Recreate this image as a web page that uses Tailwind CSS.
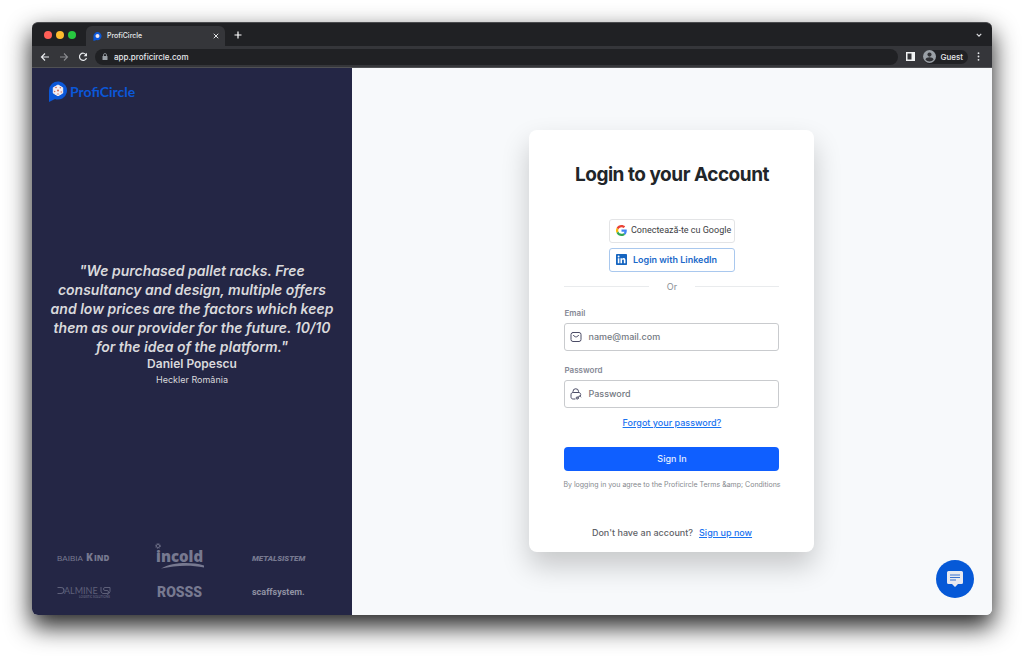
<!DOCTYPE html>
<html lang="en">
<head>
    <meta charset="UTF-8">
    <meta name="viewport" content="width=device-width, initial-scale=1.0">
    <title>ProfiCircle</title>
    <script src="https://cdn.jsdelivr.net/npm/@tailwindcss/browser@4"></script>
</head>
<body class="h-screen bg-white px-8 pt-[22px] pb-[43px] font-['Inter',sans-serif] overflow-hidden">
    <div class="relative flex flex-col h-full rounded-md shadow-[0_11px_24px_1px_rgba(0,0,0,0.85)]">
        <!-- Tab strip -->
        <div class="flex items-center h-6 shrink-0 bg-[#202124] rounded-t-md pl-3 pr-[10px] border-t border-[#4a4b4e]">
            <div class="flex gap-1 w-[42px]">
                <span class="size-2 rounded-full bg-[#ff5f57]"></span>
                <span class="size-2 rounded-full bg-[#febc2e]"></span>
                <span class="size-2 rounded-full bg-[#28c840]"></span>
            </div>
            <div class="flex items-center self-end w-[139px] h-5 bg-[#35363a] rounded-t-md pl-[7px] pr-[6px]">
                <svg class="size-[9px]" viewBox="0 0 20 20"><path d="M1 20V9a9 9 0 1 1 7 9z" fill="#0b57d8"/><circle cx="10" cy="9" r="4.5" fill="#f1e6ea"/></svg>
                <span class="ml-[5px] text-[7px] font-medium text-[#e8eaed]">ProfiCircle</span>
                <button type="button" aria-label="Close tab" class="ml-auto">
                    <svg class="size-[6px]" viewBox="0 0 8 8" stroke="#e8eaed" stroke-width="1.3"><path d="M1 1l6 6M7 1L1 7"/></svg>
                </button>
            </div>
            <button type="button" aria-label="New tab" class="ml-[9px]">
                <svg class="size-2" viewBox="0 0 8 8" stroke="#fff" stroke-width="1.2"><path d="M4 .5v7M.5 4h7"/></svg>
            </button>
            <button type="button" aria-label="Search tabs" class="ml-auto">
                <svg class="size-[6px]" viewBox="0 0 8 8" fill="none" stroke="#dcdde0" stroke-width="1.6"><path d="M1 2.500l3 3 3-3"/></svg>
            </button>
        </div>

        <!-- Toolbar -->
        <div class="flex items-center h-[22px] shrink-0 bg-[#35363a] border-b border-[#505154] pl-2 pr-[9px]">
            <button type="button" aria-label="Back"><svg class="size-[10px]" viewBox="0 0 10 10" fill="none" stroke="#e8eaed" stroke-width="1.2"><path d="M9 5H1.500M5 1.500L1.500 5 5 8.500"/></svg></button>
            <button type="button" aria-label="Forward" class="ml-[9px]"><svg class="size-[10px]" viewBox="0 0 10 10" fill="none" stroke="#8b8c90" stroke-width="1.1"><path d="M1 5h7.500M5 1.500L8.500 5 5 8.500"/></svg></button>
            <button type="button" aria-label="Reload" class="ml-[9px]"><svg class="size-[10px]" viewBox="0 0 10 10" fill="none" stroke="#e8eaed" stroke-width="1.2"><path d="M8.200 3A3.600 3.600 0 1 0 8.500 6"/><path d="M9 .8v3.400H5.600z" fill="#e8eaed" stroke="none"/></svg></button>
            <div class="flex flex-1 items-center h-4 ml-[7px] px-[7px] rounded-full bg-[#202124]">
                <svg class="w-[6px] h-2" viewBox="0 0 6 8"><path d="M1.500 3V2a1.500 1.500 0 0 1 3 0v1" fill="none" stroke="#9aa0a6" stroke-width=".8"/><rect x=".5" y="3" width="5" height="4" rx=".6" fill="#9aa0a6"/></svg>
                <input type="text" aria-label="Address" value="app.proficircle.com" class="flex-1 ml-[6px] text-[8px] leading-4 font-medium text-[#e8eaed] outline-none">
            </div>
            <button type="button" aria-label="Side panel" class="ml-2"><svg class="size-[9px]" viewBox="0 0 9 9"><path d="M0 0h9v9H0z" fill="#f1f3f4"/><path d="M1.500 1.500h4v6h-4z" fill="#35363a"/></svg></button>
            <button type="button" class="flex items-center gap-[4px] h-[14px] ml-2 pr-[5px] rounded-full bg-[#202124] text-[8px] font-medium text-[#e8eaed]">
                <svg class="size-[13px]" viewBox="0 0 24 24"><circle cx="12" cy="12" r="12" fill="#9aa0a6"/><circle cx="12" cy="8.500" r="3.800" fill="#303135"/><path d="M4.500 18c1-6 14-6 15 0a10 10 0 0 1-15 0z" fill="#303135"/></svg>
                Guest
            </button>
            <button type="button" aria-label="Menu" class="ml-[6px]"><svg class="w-[9px] h-[9px]" viewBox="0 0 9 9" fill="#e8eaed"><circle cx="4.500" cy="1.200" r=".9"/><circle cx="4.500" cy="4.500" r=".9"/><circle cx="4.500" cy="7.800" r=".9"/></svg></button>
        </div>

        <div class="flex flex-1 min-h-0">
            <!-- Sidebar -->
            <aside class="flex flex-col w-1/3 bg-[#242645] rounded-bl-md px-4 pt-[13px] pb-[9px]">
                <a href="#" class="flex items-center gap-[2px] text-sm leading-[21px] font-bold text-[#0b57d8] font-['Lato',sans-serif]">
                    <svg class="w-5 h-[21px]" viewBox="0 0 20 21">
                        <path d="M1 21V9.500A9 9 0 1 1 7 18z" fill="#0b57d8"/>
                        <path d="M10 4l4.700 2.700v5.400L10 14.800l-4.700-2.700V6.700z" fill="#f4eef2" stroke="#f4eef2" stroke-linejoin="round"/>
                        <g fill="#d2624f"><circle cx="10" cy="9.500" r="1"/><circle cx="8" cy="6.500" r=".8"/><circle cx="12.300" cy="6.800" r=".7"/><circle cx="6.700" cy="10.500" r=".7"/><circle cx="13.200" cy="11" r=".7"/><circle cx="10" cy="13" r=".7"/></g>
                    </svg>
                    ProfiCircle
                </a>
                <div class="flex-1 flex flex-col justify-center pt-[3px] text-center text-[#d9d9dc]">
                    <blockquote class="text-sm leading-[19px] font-semibold italic">"We purchased pallet racks. Free<br>consultancy and design, multiple offers<br>and low prices are the factors which keep<br>them as our provider for the future. 10/10<br>for the idea of the platform."</blockquote>
                    <p class="text-xs leading-4 font-semibold">Daniel Popescu</p>
                    <p class="text-[9px] leading-4">Heckler România</p>
                </div>
                <!-- Partners -->
                <div class="grid grid-cols-[auto_auto_auto] justify-between gap-y-[7px] items-center pl-2 pr-7 text-[#777990]">
                    <svg class="w-[60px] h-7" viewBox="0 0 60 28" fill="currentColor"><text x="1" y="18" font-family="Liberation Sans" font-size="8">BAIBIA</text><text x="30" y="18" font-family="Open Sans" font-weight="800" font-size="10">K</text><text x="38" y="18" font-family="Open Sans" font-weight="800" font-size="8">IND</text></svg>
                    <svg class="w-[60px] h-7" viewBox="0 0 60 28" fill="currentColor"><circle cx="6" cy="3" r="1.600" fill="none" stroke="currentColor" stroke-width=".8"/><circle cx="6" cy="3" r="2.500" fill="none" stroke="currentColor" stroke-width=".8" stroke-dasharray="1 1"/><text x="4" y="19" font-family="Open Sans" font-weight="800" font-size="15">incold</text><path d="M9 25.500c11-6 29-7 43-3v2c-14-3-29-2-43 1z"/></svg>
                    <svg class="w-[60px] h-7" viewBox="0 0 60 28" fill="currentColor"><text x="4" y="18" font-family="Roboto" font-weight="900" font-size="8" font-style="italic">METALSISTEM</text></svg>
                    <svg class="w-[60px] h-7" viewBox="0 0 60 28" fill="currentColor" opacity=".7"><path d="M1.500 9.500H5a3 3 0 0 1 0 6H1.500" fill="none" stroke="currentColor" stroke-width="1.200"/><text x="8" y="16" font-family="Lato" font-size="9">ALMINE</text><path d="M45 9v4a2.500 2.500 0 0 0 3 2.500h3a1.500 1.500 0 0 0 0-3h-2a1.500 1.500 0 0 1 0-3h5v4a4 4 0 0 1-3 3" fill="none" stroke="currentColor"/><text x="23" y="20" font-family="Lato" font-weight="700" font-size="3">LOGISTIC SOLUTIONS</text></svg>
                    <svg class="w-[60px] h-7" viewBox="0 0 60 28" fill="currentColor"><text x="5" y="19" font-family="Roboto" font-weight="900" font-size="14">ROSSS</text></svg>
                    <svg class="w-[60px] h-7" viewBox="0 0 60 28" fill="#9092a3"><text x="4" y="17" font-family="Roboto" font-weight="700" font-size="9">scaffsystem.</text></svg>
                </div>
            </aside>

            <!-- Login -->
            <main class="flex flex-1 items-center justify-center bg-[#f7f9fb] rounded-br-md pb-[2px]">
                <div class="w-[285px] bg-white rounded-lg px-[35px] pt-[33px] pb-[11px] shadow-[0_14px_28px_rgba(0,0,0,0.2)]">
                    <h1 class="text-[19px] leading-6 font-bold tracking-tight text-center text-[#212529]">Login to your Account</h1>

                    <div class="flex flex-col gap-[5px] w-[126px] mx-auto mt-8">
                        <button type="button" class="flex items-center gap-[4px] h-6 px-[6px] border border-[#e3e4e6] rounded-[3px] font-['Roboto',sans-serif] text-[9px] text-[#3c4043] whitespace-nowrap">
                            <svg class="size-[11px] shrink-0" viewBox="0 0 48 48"><path fill="#EA4335" d="M24 9.500c3.540 0 6.710 1.220 9.210 3.600l6.850-6.850C35.900 2.380 30.470 0 24 0 14.620 0 6.510 5.380 2.560 13.220l7.980 6.190C12.430 13.720 17.740 9.500 24 9.500z"/><path fill="#4285F4" d="M46.980 24.550c0-1.570-.15-3.090-.38-4.550H24v9.020h12.940c-.58 2.960-2.260 5.480-4.780 7.180l7.730 6c4.510-4.180 7.090-10.360 7.090-17.650z"/><path fill="#FBBC05" d="M10.530 28.590A14.500 14.500 0 0 1 10.530 19.410l-7.980-6.190a24 24 0 0 0 0 21.560z"/><path fill="#34A853" d="M24 48c6.480 0 11.930-2.130 15.890-5.810l-7.730-6c-2.150 1.450-4.920 2.300-8.160 2.300-6.260 0-11.570-4.220-13.470-9.910l-7.980 6.190C6.510 42.620 14.620 48 24 48z"/></svg>
                            Conectează-te cu Google
                        </button>
                        <button type="button" class="flex items-center gap-[6px] h-6 px-[6px] border border-[#a9c8ee] rounded-[3px] text-[9px] font-semibold text-[#1b69c9] whitespace-nowrap">
                            <svg class="size-[11px] shrink-0" viewBox="0 0 22 22"><rect width="22" height="22" rx="1.500" fill="#1565c0"/><g fill="#fff"><circle cx="5.200" cy="5" r="1.900"/><path d="M3.600 8.300h3.200V18.500H3.600zM8.900 8.300h3v1.500c1.500-2.600 7-2.400 7 2.600v6.100h-3.200v-5.400c0-3-3.600-2.800-3.600 0v5.400H8.900z"/></g></svg>
                            Login with LinkedIn
                        </button>
                    </div>

                    <div class="flex items-center gap-[18px] mt-[7px] text-[9px] leading-4 text-[#8a8f94]">
                        <span class="flex-1 h-px bg-[#e9ebed]"></span>Or<span class="flex-1 h-px bg-[#e9ebed]"></span>
                    </div>

                    <form>
                        <label for="email" class="block mt-[10px] text-[8px] leading-4 font-semibold text-[#858895]">Email</label>
                        <div class="flex items-center gap-[6px] h-7 mt-[2px] px-[5px] border border-[#c9cbce] rounded-[3px]">
                            <svg class="size-3 shrink-0" viewBox="0 0 24 24" fill="none" stroke="#4b4c66" stroke-width="2" stroke-linecap="round" stroke-linejoin="round"><rect x="2" y="3" width="20" height="18" rx="4"/><path d="M7 9l3.500 2.500a3 3 0 0 0 3 0L17 9"/></svg>
                            <input type="email" id="email" name="email" placeholder="name@mail.com" class="w-full text-[9px] font-medium placeholder:text-[#737982] outline-none">
                        </div>

                        <label for="password" class="block mt-[11px] text-[8px] leading-4 font-semibold text-[#858895]">Password</label>
                        <div class="flex items-center gap-[6px] h-7 mt-[2px] px-[5px] border border-[#c9cbce] rounded-[3px]">
                            <svg class="size-3 shrink-0" viewBox="0 0 24 24" fill="none" stroke="#4b4c66" stroke-width="2" stroke-linecap="round" stroke-linejoin="round"><path d="M6 9V7a5 5 0 0 1 11 0v2M10 22H6.500c-3 0-4.500-1.500-4.500-4.500v-4C2 10.500 3.500 9 6.500 9H17c2.500 0 4 1 4.400 3.500"/><circle cx="14.500" cy="20" r="2.200"/><path d="M16 18.500l5.500-4M19.500 16l2 2"/></svg>
                            <input type="password" id="password" name="password" placeholder="Password" class="w-full text-[9px] font-medium placeholder:text-[#737982] outline-none">
                        </div>

                        <p class="mt-[7px] text-center text-[9px] leading-4 font-medium"><a href="#" class="text-[#1a73f0] underline">Forgot your password?</a></p>
                        <button type="submit" class="block w-full h-6 mt-4 bg-[#0f5fff] rounded-[4px] text-[9px] font-medium text-[#e4eeff]">Sign In</button>
                    </form>

                    <p class="-mx-1 mt-[6px] text-center text-[7px] leading-4 text-[#85898e] whitespace-nowrap">By logging in you agree to the Proficircle Terms &amp;amp; Conditions</p>
                    <p class="flex justify-center gap-[6px] mt-8 text-[9px] leading-4 font-medium text-[#5f6368]">Don't have an account? <a href="#" class="text-[#1a73f0] underline">Sign up now</a></p>
                </div>
            </main>
        </div>

        <!-- Chat launcher -->
        <button type="button" aria-label="Open chat" class="absolute right-[18px] bottom-[17px] flex items-center justify-center size-[38px] rounded-full bg-[#0659d7]">
            <svg class="size-4" viewBox="0 0 16 16"><path d="M1.500 0h13A1.500 1.500 0 0 1 16 1.500v10a1.500 1.500 0 0 1-1.500 1.500H11l-3 3-3-3H1.500A1.500 1.500 0 0 1 0 11.500v-10A1.500 1.500 0 0 1 1.500 0z" fill="#e9eaf0"/><path d="M3 4h10M3 6.500h10M3 9h6" stroke="#3a72d0"/></svg>
        </button>
    </div>
</body>
</html>
